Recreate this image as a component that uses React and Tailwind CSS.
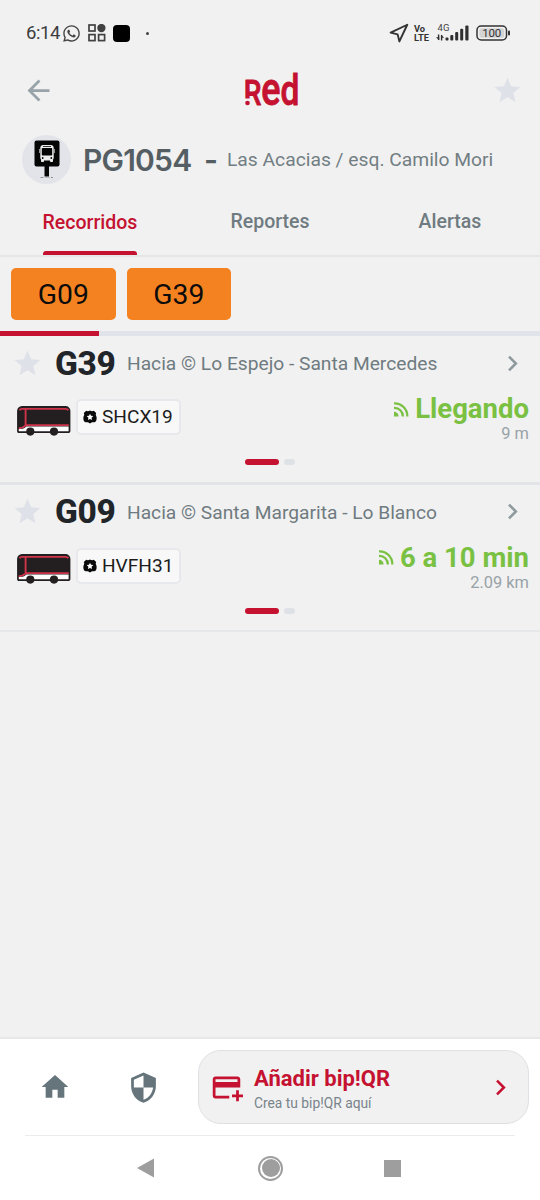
import { useState } from 'react'
import { FaWhatsapp } from 'react-icons/fa'
import { Navigation } from 'lucide-react'
import {
  MdAddCard,
  MdArrowBack,
  MdChevronRight,
  MdHome,
  MdSecurity,
  MdStar,
} from 'react-icons/md'

const tabs = ['Recorridos', 'Reportes', 'Alertas']

const services = ['G09', 'G39']

const arrivals = [
  {
    id: 1,
    route: 'G39',
    destination: 'Hacia © Lo Espejo - Santa Mercedes',
    plate: 'SHCX19',
    time: 'Llegando',
    distance: '9 m',
  },
  {
    id: 2,
    route: 'G09',
    destination: 'Hacia © Santa Margarita - Lo Blanco',
    plate: 'HVFH31',
    time: '6 a 10 min',
    distance: '2.09 km',
  },
]

function AppsIcon() {
  return (
    <svg width="18" height="18" viewBox="0 0 18 18" fill="none" stroke="#414141" strokeWidth="1.7">
      <rect x="1" y="1" width="6" height="6" />
      <circle cx="13.4" cy="4" r="3.3" fill="#414141" />
      <rect x="1" y="10.6" width="6" height="6" />
      <rect x="10.6" y="10.6" width="6" height="6" />
    </svg>
  )
}

function SignalIcon() {
  return (
    <svg width="34" height="20" viewBox="0 0 34 20" fill="#2f2f2f" overflow="visible">
      <text x="1.5" y="7.5" fontSize="9.5" fontFamily="Roboto, sans-serif" textLength="12" fill="#444">4G</text>
      <path d="M2.6 11.5v5.5M5.6 12v5.5" stroke="#2f2f2f" strokeWidth="1.4" />
      <path d="M0 14.2h3.2v3zM8.2 14.8H5v-3.1z" />
      <rect x="9.5" y="14.5" width="3" height="3" rx="1" />
      <rect x="14.3" y="12" width="3" height="5.5" rx="1" />
      <rect x="19.2" y="9" width="3" height="8.5" rx="1" />
      <rect x="24.2" y="5.8" width="3" height="11.7" rx="1" />
      <rect x="29.3" y="2.5" width="3.2" height="15" rx="1" />
    </svg>
  )
}

function BatteryIcon() {
  return (
    <svg width="35" height="16" viewBox="0 0 35 16">
      <rect x="1" y="1" width="29.5" height="14" rx="4.2" fill="none" stroke="#333" strokeWidth="1.5" />
      <rect x="3.4" y="3.3" width="24.7" height="9.4" rx="2" fill="#d4d4d4" />
      <rect x="32" y="5.5" width="2" height="5" rx="1" fill="#333" />
      <text x="15.8" y="12" fontSize="11.5" textAnchor="middle" fontFamily="Roboto, sans-serif" textLength="19" fill="#333">100</text>
    </svg>
  )
}

// the wordmark has a small R whose leg ends in a dot
function RedLogo() {
  return (
    <svg className="-ml-[4px]" width="56" height="64" viewBox="0 0 56 64">
      <text
        transform="translate(-0.3 47) scale(0.78 1)"
        fill="#c41230"
        stroke="#c41230"
        strokeWidth="0.9"
        strokeLinejoin="round"
        fontFamily="Roboto, sans-serif"
        fontWeight="500"
      >
        <tspan fontSize="36">R</tspan>
        <tspan fontSize="46">e</tspan>
        <tspan fontSize="43">d</tspan>
      </text>
      <rect x="0" y="40.5" width="6.2" height="8" fill="#f1f1f1" />
      <circle cx="3.5" cy="45" r="2.3" fill="#c41230" />
    </svg>
  )
}

function StopIcon() {
  return (
    <div className="flex h-[49px] w-[49px] items-center justify-center rounded-full bg-[#e2e4ea]">
      <svg width="26" height="38" viewBox="0 0 26 38">
        <rect x="0.5" y="0.5" width="25" height="26" rx="2" fill="#050505" />
        <rect x="10.5" y="26" width="4.5" height="10.5" fill="#050505" />
        <path d="M6.5 37.5h3M11 38h5M17 37.5h2" stroke="#777" strokeWidth="0.8" />
        <rect x="6.3" y="5" width="13.4" height="15.5" rx="3" fill="#eee" />
        <rect x="7.8" y="8" width="10.4" height="7.6" rx="0.8" fill="#050505" />
        <path d="M9 6.5h8" stroke="#050505" strokeWidth="0.8" />
        <path d="M5.6 9v4M20.4 9v4" stroke="#eee" strokeWidth="0.7" />
        <circle cx="8.7" cy="18" r="0.9" fill="#050505" />
        <circle cx="17.3" cy="18" r="0.9" fill="#050505" />
        <rect x="7" y="19.8" width="3" height="2.3" rx="0.8" fill="#eee" />
        <rect x="16" y="19.8" width="3" height="2.3" rx="0.8" fill="#eee" />
      </svg>
    </div>
  )
}

function BusIcon() {
  return (
    <svg width="54" height="31" viewBox="0 0 54 31">
      <path d="M5 0.7h43.5a4.2 4.2 0 0 1 4.2 4.2v20.4a1 1 0 0 1-1 1H1.8a1 1 0 0 1-1-1V5A4.3 4.3 0 0 1 5 .7z" fill="#231f20" stroke="#231f20" strokeWidth="1.4" />
      <path d="M1.8 22.8c4 0 5.5-.4 7.4-2.4H51.6v4.8H1.8z" fill="#fff" />
      <path d="M2.6 4.3Q3.2 2.9 5 2.9h43.5q2 0 2.8 1.4M8.6 3v17.2M1.8 22.2c4 0 5-.9 7.4-3.1H51.8" fill="none" stroke="#d0344a" strokeWidth="1.9" />
      <circle cx="13.3" cy="25.6" r="4.1" fill="#231f20" />
      <circle cx="37" cy="25.6" r="4.1" fill="#231f20" />
    </svg>
  )
}

function BadgeIcon() {
  return (
    <svg width="14" height="14" viewBox="0 0 14 14">
      <path d="M3.2.7Q5 1.7 7 .5q2 1.2 3.8.2l2.4 2.2q-.9 1.4-.1 2.8c.7 1.2.7 3.2.2 4.7-.4 1.2-1.6 1.9-3 1.9-1.3 0-2.2.3-3.3 1.3-1.1-1-2-1.3-3.3-1.3-1.4 0-2.6-.7-3-1.9C.2 8.9.2 6.9.9 5.7q.8-1.4-.1-2.8z" fill="#0a0a0a" />
      <path d="M7 3.7l1 2.1 2.3.3-1.7 1.6.4 2.3L7 8.9l-2 1.100.4-2.300-1.700-1.600L6 5.800z" fill="#fff" />
    </svg>
  )
}

function LiveIcon() {
  return (
    <svg className="mr-1.5" width="15" height="15" viewBox="0 0 15 15" fill="none" stroke="#7ac143" strokeWidth="2.3">
      <path d="M0 1.3A12.7 12.7 0 0 1 13.3 14.5M0 6A8.2 8.2 0 0 1 8.8 14.5" />
      <path d="M0 9.8A4.5 4.5 0 0 1 4.6 14.5H0z" fill="#7ac143" stroke="none" />
    </svg>
  )
}

function StatusBar() {
  return (
    <div className="flex h-[66px] items-center justify-between pr-[29px] pl-[26px]">
      <div className="flex items-center">
        <span className="w-[37px] pt-px text-[18.5px] tracking-[-0.4px] text-[#3d3d3d]">6:14</span>
        <FaWhatsapp size={19} color="#444" className="-ml-px" />
        <div className="ml-[7px]">
          <AppsIcon />
        </div>
        <div className="ml-[7px] h-[17px] w-[17px] rounded-[4px] bg-black" />
        <div className="ml-[16px] h-[3px] w-[3px] rounded-full bg-[#444]" />
      </div>
      <div className="flex items-center">
        <Navigation size={21} color="#333" strokeWidth={2.2} />
        <div className="ml-[5px] flex w-[22px] flex-col text-[9.3px] leading-[9px] font-bold text-[#333]">
          <span>Vo</span>
          <span>LTE</span>
        </div>
        <SignalIcon />
        <div className="ml-1.5">
          <BatteryIcon />
        </div>
      </div>
    </div>
  )
}

function ArrivalRow({ item }) {
  return (
    <>
      <div className="flex h-[54px] items-center pr-3 pl-3">
        <MdStar size={31} color="#dee1e8" />
        <span className="ml-3 w-[72px] pt-px text-[33.5px] leading-none font-extrabold tracking-[-0.3px] text-[#212529]">
          {item.route}
        </span>
        <span className="flex-1 pt-[3px] text-[19.2px] whitespace-nowrap text-[#6f7b80]">{item.destination}</span>
        <MdChevronRight size={31} color="#8f9a9f" />
      </div>
      <div className="flex h-[60px] justify-between pr-[11px] pl-[17px]">
        <div className="flex h-[54px] items-center">
          <div className="mt-[8px]">
            <BusIcon />
          </div>
          <div className="ml-[5px] flex h-[36px] w-[105px] items-center gap-[5.5px] rounded-[5px] border-2 border-[#e7e8eb] bg-[#f8f8f8] pl-[4.5px] text-[19.1px] text-[#1c1c1c]">
            <BadgeIcon />
            <span className="pt-px">{item.plate}</span>
          </div>
        </div>
        <div className="flex flex-col items-end">
          <div className="flex h-[36px] items-center pt-[2px] text-[27.5px] font-bold text-[#7ac143]">
            <LiveIcon />
            {item.time}
          </div>
          <span className="text-[16.4px] leading-[16px] text-[#98a2a7]">{item.distance}</span>
        </div>
      </div>
      <div className="flex h-[31.5px] justify-center gap-[5px] pt-[9px]">
        <div className="h-[6px] w-[34px] rounded-full bg-[#c41230]" />
        <div className="h-[6px] w-[11px] rounded-full bg-[#dee1e6]" />
      </div>
    </>
  )
}

export default function App() {
  const [activeTab, setActiveTab] = useState('Recorridos')

  return (
    <div className="flex h-[1200px] w-[540px] flex-col overflow-hidden bg-[#f1f1f1] font-[Roboto,sans-serif]">
      <StatusBar />

      {/* Header */}
      <div className="flex h-12 items-center justify-between pr-[17px] pl-[22px]">
        <MdArrowBack size={33} color="#98a3a9" />
        <RedLogo />
        <MdStar size={31} color="#dee1e8" />
      </div>

      {/* Stop */}
      <div className="flex h-[90px] items-center pl-[22px]">
        <StopIcon />
        <span className="ml-3 w-[121px] pt-0.5 font-[Inter,sans-serif] text-[30px] font-semibold tracking-[-0.8px] text-[#545e63]">
          PG1054
        </span>
        <span className="w-[23px] pt-0.5 font-[Inter,sans-serif] text-[30px] font-semibold text-[#545e63]">-</span>
        <span className="pt-0.5 text-[19.25px] whitespace-nowrap text-[#727e83]">Las Acacias / esq. Camilo Mori</span>
      </div>

      {/* Tabs */}
      <div className="grid h-[53px] grid-cols-3 border-b-2 border-[#e5e6e8]">
        {tabs.map((tab) => (
          <button
            key={tab}
            className={`mx-auto flex flex-col items-center justify-between text-[19.5px] leading-[34px] font-medium ${
              activeTab === tab ? 'pt-0.5 text-[#c41230]' : 'pt-px text-[#6f7b80]'
            }`}
            onClick={() => setActiveTab(tab)}
          >
            {tab}
            {activeTab === tab && <div className="h-1 w-full rounded-t-[3px] bg-[#c41230]" />}
          </button>
        ))}
      </div>

      {/* Service filter */}
      <div className="flex h-[74px] gap-[11px] pt-[10.5px] pl-[11px]">
        {services.map((service) => (
          <div
            key={service}
            className="flex h-[52.5px] w-[104.5px] items-center justify-center rounded-[5px] bg-[#f58220] pt-0.5 text-[28.3px] text-[#0c0c0c]"
          >
            {service}
          </div>
        ))}
      </div>
      <div className="h-[5px] bg-[#e1e3ea]">
        <div className="h-full w-[99px] bg-[#c41230]" />
      </div>

      {/* Arrivals */}
      <div className="flex-1">
        <ArrivalRow item={arrivals[0]} />
        <div className="h-[3px] bg-[#e2e4e8]" />
        <ArrivalRow item={arrivals[1]} />
        <div className="h-[2px] bg-[#e6e7e9]" />
      </div>

      {/* Bottom bar */}
      <div className="flex h-[163px] flex-col border-t-2 border-[#e8e8e8] bg-white">
        <div className="flex h-[96px] items-center pl-[39px]">
          <MdHome size={32} color="#66757b" />
          <MdSecurity className="ml-[56px]" size={33} color="#66757b" />
          <div className="ml-[38px] flex h-[74px] w-[331px] items-center rounded-[23px] border border-[#dfe0e4] bg-[#f1f1f2] pr-[12px] pl-[11px]">
            <MdAddCard size={33} color="#c41230" />
            <div className="ml-[11px] flex flex-1 flex-col pt-1">
              <span className="text-[22px] leading-[27px] font-bold text-[#c41230]">Añadir bip!QR</span>
              <span className="text-[13.8px] leading-[22px] text-[#78848a]">Crea tu bip!QR aquí</span>
            </div>
            <MdChevronRight size={31} color="#c41230" />
          </div>
        </div>
        <div className="mx-[25px] h-px bg-[#ececec]" />
        <div className="flex h-[64px] items-center pl-[137px]">
          <svg width="17" height="20" viewBox="0 0 17 20">
            <path d="M0 10L17 0.5v19z" fill="#9e9e9e" />
          </svg>
          <div className="ml-[104px] flex h-[25px] w-[25px] items-center justify-center rounded-full border-2 border-[#9e9e9e]">
            <div className="h-[18px] w-[18px] rounded-full bg-[#9e9e9e]" />
          </div>
          <div className="ml-[101px] h-[17px] w-[17px] bg-[#9e9e9e]" />
        </div>
      </div>
    </div>
  )
}
